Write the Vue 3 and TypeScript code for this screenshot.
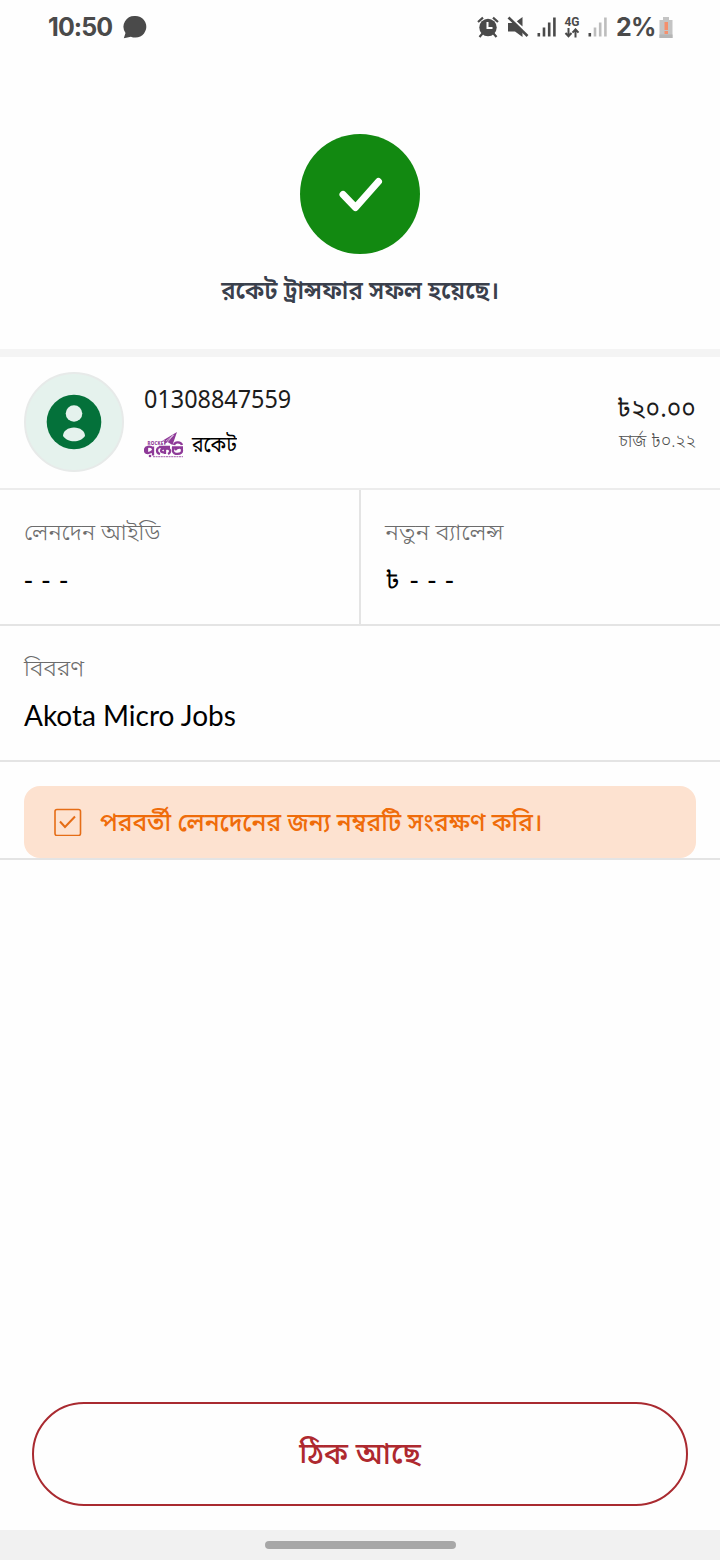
<script setup lang="ts">
interface Field {
  label: string
  value: string
}

const phone = '01308847559'
const transaction: Field = { label: 'লেনদেন আইডি', value: '- - -' }
const balance: Field = { label: 'নতুন ব্যালেন্স', value: '- - -' }
const description: Field = { label: 'বিবরণ', value: 'Akota Micro Jobs' }
const bars = [3.5, 9, 14, 19]
</script>

<template>
  <div class="screen">
    <header class="status">
      <span class="clock">10:50</span>
      <svg class="chat" width="24" height="24" viewBox="0 0 24 24">
        <path d="M12.5 1a11 10.8 0 1 1-4.6 20.7L.8 23.2l1.7-5.3A11 10.8 0 0 1 12.5 1z" fill="#4a4a4a" />
      </svg>
      <div class="status-right">
        <svg class="alarm" width="22" height="22" viewBox="0 0 22 22">
          <circle cx="11" cy="11.5" r="8.7" fill="#4a4a4a" />
          <path d="M1 6 6 1.6M21 6 16 1.6M5.5 17.5 2.5 21M16.5 17.5l3 3.5" stroke="#4a4a4a" stroke-width="2.2" />
          <path d="M10.5 6v6h5" fill="none" stroke="#fff" stroke-width="2" />
        </svg>
        <svg class="mute" width="22" height="22" viewBox="0 0 22 22">
          <path d="M1 7h7l7.500 7v7L8 15.500H1zM9.500 5.500 15.500 1v9.500z" fill="#4a4a4a" />
          <path d="m5 1.500 15 15" stroke="#fefefe" stroke-width="1.600" />
          <path d="m1.500 1.500 19 18.500" stroke="#4a4a4a" stroke-width="2.600" />
        </svg>
        <svg class="signal" width="20" height="20" viewBox="0 0 20 20">
          <rect v-for="(h, i) in bars" :key="i" :x="i * 5.200 + 0.500" :y="19.500 - h" width="2.600" :height="h" fill="#4a4a4a" />
        </svg>
        <div class="network">
          <span>4G</span>
          <svg width="16" height="10" viewBox="0 0 16 10">
            <path d="M4.500 0v8M1.500 5l3 3.300 3-3.300M11.500 9.500V2M8.500 4.700l3-3.300 3 3.300" fill="none" stroke="#4a4a4a" stroke-width="2" />
          </svg>
        </div>
        <svg class="signal second" width="20" height="20" viewBox="0 0 20 20">
          <rect v-for="(h, i) in bars" :key="i" :x="i * 5.200 + 0.500" :y="19.500 - h" width="2.600" :height="h" :fill="i === 0 ? '#4a4a4a' : '#bdbdbd'" />
        </svg>
        <span class="percent">2%</span>
        <svg class="battery" width="14" height="21" viewBox="0 0 14 21">
          <path d="M4 0h6v3h3.500v18H.5V3H4z" fill="#c4c4c4" />
          <path d="M.5 17.500h13V21H.5z" fill="#b5b5b5" />
          <path d="M5.500 5h3.500v8H5.500zM5.500 14h3.500v3H5.500z" fill="#f58f6c" />
        </svg>
      </div>
    </header>

    <section class="success">
      <svg width="120" height="120" viewBox="0 0 120 120">
        <circle cx="60" cy="60" r="60" fill="#128911" />
        <path d="m43 60.500 12.500 13 23-26" fill="none" stroke="#fff" stroke-width="7" stroke-linecap="round" stroke-linejoin="round" />
      </svg>
      <h1>রকেট ট্রান্সফার সফল হয়েছে।</h1>
    </section>

    <section class="recipient">
      <svg class="avatar" width="100" height="100" viewBox="0 0 100 100">
        <circle cx="50" cy="50" r="49" fill="#e5f2ed" stroke="#e7eae9" stroke-width="2" />
        <circle cx="50" cy="50" r="27.300" fill="#04713a" />
        <circle cx="50" cy="41.500" r="8.300" fill="#e5f2ed" />
        <path d="M39 64c0-5 5-8.500 11-8.500S61 59 61 64c-2.500 3.700-6.500 5.200-11 5.200S41.500 67.700 39 64z" fill="#e5f2ed" />
      </svg>
      <div class="contact">
        <div class="phone">{{ phone }}</div>
        <div class="provider">
          <svg width="40" height="27" viewBox="0 0 40 27">
            <path d="M18 9 33 0l-4.500 13-5-3-3.500 2.500.8-4z" fill="#8e3a98" />
            <path d="m21.500 9.500 8-6.500-6 7" fill="none" stroke="#fff" stroke-width=".6" />
            <text x="3.500" y="12.500" class="logo-name">ROCKET</text>
            <g fill="none" stroke="#8e3a98" stroke-width="2.300">
              <path d="M9 14.500v9M9 16.500c-3-3-8-2-8 1.500 0 4 5 4 8 .5M3 16v5M16 15c-4 1-4 6 0 7M15 15h11M21 15v7M21 17c-5-2-5.500 5 0 3M21 17c5-2 7 3 3 5M28 15.500h11M29 15v4c0 4 9 4 9-.5s-5-3-7-.5M30 13c1-4 7-3 8 0" />
            </g>
            <circle cx="6" cy="24" r="1.300" fill="#8e3a98" />
            <path d="M9 24.700h30" stroke="#b47abb" stroke-width="1.200" stroke-dasharray="2 .6" />
          </svg>
          <span>রকেট</span>
        </div>
      </div>
      <div class="amounts">
        <div class="amount">৳২০.০০</div>
        <div class="charge">চার্জ ৳০.২২</div>
      </div>
    </section>

    <section class="pair">
      <div class="cell">
        <div class="label">{{ transaction.label }}</div>
        <div class="value dashes">{{ transaction.value }}</div>
      </div>
      <div class="cell">
        <div class="label balance-label">{{ balance.label }}</div>
        <div class="value balance"><span>৳</span><span class="dashes">{{ balance.value }}</span></div>
      </div>
    </section>
    <section class="cell description">
      <div class="label">{{ description.label }}</div>
      <div class="value note">{{ description.value }}</div>
    </section>

    <section class="save-wrap">
      <div class="save">
        <svg width="28" height="28" viewBox="0 0 28 28" fill="none" stroke="#e56d16">
          <rect x="1" y="1.500" width="25.500" height="26" rx="2" stroke-width="1.600" />
          <path d="m6 13.500 5 5.500 10-10.500" stroke-width="2" />
        </svg>
        <span>পরবর্তী লেনদেনের জন্য নম্বরটি সংরক্ষণ করি।</span>
      </div>
    </section>

    <button class="ok" type="button"><span>ঠিক আছে</span></button>
    <footer class="nav"><div class="handle"></div></footer>
  </div>
</template>

<style>
body {
  margin: 0;
  background: #fefefe;
}
</style>

<style scoped>
.screen {
  box-sizing: border-box;
  width: 720px;
  height: 1560px;
  display: flex;
  flex-direction: column;
  overflow: hidden;
  background: #fefefe;
  color: #000;
  font-family: "Noto Sans", "Noto Sans Bengali", sans-serif;
}
.screen > * { flex-shrink: 0; }
svg { display: block; flex-shrink: 0; }
.status {
  box-sizing: border-box;
  height: 54px;
  padding: 0 47px 0 48px;
  display: flex;
  align-items: center;
  color: #4a4a4a;
  font-family: "Inter", "Roboto", sans-serif;
}
.clock { width: 75px; font-size: 25px; font-weight: 750; letter-spacing: -.9px; }
.status-right { margin-left: auto; display: flex; align-items: center; }
.mute { margin-left: 8px; }
.signal { margin-left: 8px; }
.network {
  width: 16px;
  margin-left: 7px;
  display: flex;
  flex-direction: column;
  align-items: center;
  font-family: "Roboto", sans-serif;
  font-size: 12px;
  font-weight: 700;
  line-height: 12px;
}
.signal.second { margin-left: 8px; }
.percent { margin-left: 8px; width: 43px; font-size: 25px; font-weight: 750; letter-spacing: -.8px; }
.success {
  height: 215px;
  border-bottom: 8px solid #f4f4f4;
  padding-top: 80px;
  display: flex;
  flex-direction: column;
  align-items: center;
}
h1 {
  margin: 15px 0 0;
  color: #3a404c;
  font-size: 25px;
  line-height: 40px;
  font-weight: 600;
  transform: scaleX(.957);
  white-space: nowrap;
}
.recipient {
  box-sizing: border-box;
  height: 133px;
  padding: 0 24px 2px;
  border-bottom: 2px solid #ececec;
  display: flex;
  align-items: center;
}
.contact { margin-left: 20px; }
.phone, .provider span, .label, .save span { transform-origin: left center; }
.phone { font-size: 25px; line-height: 40px; color: #1c1c1c; transform: scaleX(.936); }
.provider { display: flex; align-items: center; gap: 8px; height: 40px; margin-top: 7px; font-size: 21.5px; }
.provider span { transform: scaleX(.9); }
.logo-name { fill: #8e3a98; font-size: 4.500px; font-weight: 800; letter-spacing: .2px; }
.amounts { margin-left: auto; text-align: right; white-space: nowrap; }
.amounts > div { transform-origin: right center; }
.amount { font-size: 25px; line-height: 36px; color: #1c1c1c; transform: scaleX(.98); }
.charge { font-size: 18px; line-height: 28px; color: #505050; font-weight: 350; margin-top: 1px; transform: scaleX(.955); }
.pair { display: flex; height: 134px; border-bottom: 2px solid #e4e4e4; }
.pair .cell { width: 50%; }
.pair .cell + .cell { border-left: 2px solid #e4e4e4; margin-left: -1px; }
.cell { box-sizing: border-box; padding: 21px 24px 0; }
.label { font-size: 23px; line-height: 40px; color: #6c6c6c; white-space: nowrap; font-weight: 300; }
.balance-label { transform: scaleX(1.035); }
.value { font-size: 27.5px; line-height: 40px; margin-top: 8px; }
.note { font-family: "Lato", sans-serif; font-size: 28px; }
.dashes { letter-spacing: .8px; }
.balance { display: flex; gap: 10px; font-size: 25px; }
.balance .dashes { font-size: 27.5px; }
.description { height: 136px; border-bottom: 2px solid #e4e4e4; }
.save-wrap { padding: 24px 24px 0; border-bottom: 2px solid #e4e4e4; }
.save {
  height: 72px;
  box-sizing: border-box;
  padding-left: 30px;
  border-radius: 16px;
  background: #fde2d0;
  color: #ef6c0a;
  display: flex;
  align-items: center;
  gap: 18px;
  font-size: 25px;
  font-weight: 500;
  white-space: nowrap;
}
.save span { transform: scaleX(.981); }
.ok {
  box-sizing: border-box;
  height: 104px;
  margin: auto 32px 24px;
  padding: 0 0 3px;
  border: 2px solid #a92a30;
  border-radius: 52px;
  background: transparent;
  color: #ae292f;
  font: 500 30px/40px "Noto Sans", "Noto Sans Bengali", sans-serif;
}
.nav { height: 30px; background: #f1f1f1; display: flex; align-items: center; justify-content: center; }
.handle { width: 191px; height: 8px; border-radius: 4px; background: #a7a7a7; }
</style>
